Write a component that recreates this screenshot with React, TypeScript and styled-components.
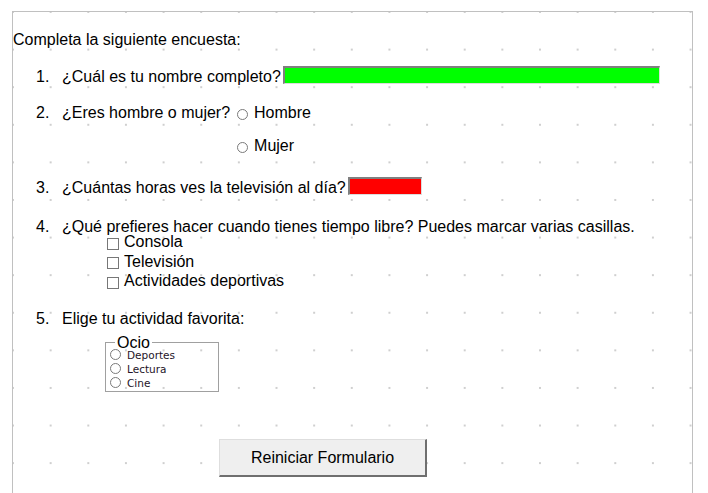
import React from "react";
import styled, { createGlobalStyle } from "styled-components";

const GlobalStyle = createGlobalStyle`
  html, body {
    margin: 0;
    padding: 0;
    overflow: hidden;
    background: #ffffff;
  }
  body {
    font-family: "Liberation Sans", Arial, sans-serif;
    font-size: 16px;
    color: #000;
  }
`;

const Page = styled.div`
  padding: 11px 15px 0 12px;
`;

const Frame = styled.div`
  box-sizing: border-box;
  width: 681px;
  height: 520px;
  border: 1px solid #c0c0c0;
  padding-top: 18px;
  background-image: radial-gradient(circle at center, #cfcfcf 0, #cfcfcf 0.7px, transparent 1.4px);
  background-size: 37.65px 37.6px;
  background-position: -18.8px -18.8px;
`;

const Intro = styled.div`
  line-height: 19px;
`;

const List = styled.ol`
  list-style: none;
  margin: 0 0 0 23px;
  padding: 0;
`;

const Item = styled.li<{ $gap: number; $lh?: number }>`
  display: flex;
  margin-top: ${(p) => p.$gap}px;
  line-height: ${(p) => p.$lh ?? 19}px;
`;

const Num = styled.span`
  width: 26px;
  flex-shrink: 0;
`;

const Body = styled.div`
  display: flex;
  flex-direction: column;
`;

const Line = styled.div`
  display: flex;
  align-items: flex-start;
`;

const TextField = styled.input.attrs({ type: "text" })<{ $w: number; $bg: string; $top: number }>`
  box-sizing: border-box;
  width: ${(p) => p.$w}px;
  height: 18px;
  margin: ${(p) => p.$top}px 0 0 2px;
  padding: 0;
  background: ${(p) => p.$bg};
  border-style: solid;
  border-width: 2px 1px 1px 2px;
  border-color: #7f7f7f #dcdcdc #dcdcdc #7f7f7f;
  outline: none;
`;

const Options = styled.div`
  display: flex;
  flex-direction: column;
  gap: 14px;
  margin-left: 7px;
`;

const Option = styled.label`
  display: flex;
  align-items: flex-start;
  gap: 6px;
`;

const Radio = styled.input.attrs({ type: "radio" })<{ $size: number; $top: number }>`
  appearance: none;
  box-sizing: border-box;
  width: ${(p) => p.$size}px;
  height: ${(p) => p.$size}px;
  margin: ${(p) => p.$top}px 0 0 0;
  border: 1px solid #7a7a7a;
  border-radius: 50%;
  background: #fff;
  flex-shrink: 0;
`;

const CheckList = styled.div`
  display: flex;
  flex-direction: column;
  gap: 4px;
  margin-left: 45px;
  line-height: 15px;
`;

const CheckRow = styled.label`
  display: flex;
  align-items: flex-start;
  gap: 5px;
`;

const Check = styled.input.attrs({ type: "checkbox" })`
  appearance: none;
  box-sizing: border-box;
  width: 12px;
  height: 12px;
  margin: 3.5px 0 0 0;
  border: 1px solid #777;
  background: #fff;
  flex-shrink: 0;
`;

const Group = styled.fieldset`
  box-sizing: border-box;
  width: 114px;
  min-width: 0;
  margin: 8px 0 0 43px;
  padding: 0 4px 1px 4px;
  border: 1px solid #a0a0a0;
`;

const GroupTitle = styled.legend`
  margin-left: 5px;
  padding: 0 2px;
  font-size: 16px;
  line-height: 14px;
`;

const GroupItems = styled.div`
  display: flex;
  flex-direction: column;
  margin-top: -2px;
`;

const GroupRow = styled.label`
  display: flex;
  align-items: center;
  gap: 6px;
  height: 14px;
  font-family: "DejaVu Sans", Verdana, sans-serif;
  font-size: 10.5px;
  line-height: 14px;
  color: #241428;
`;

const ButtonRow = styled.div`
  margin: 47.5px 0 0 206px;
`;

const ResetButton = styled.button`
  box-sizing: border-box;
  width: 208px;
  height: 38px;
  padding: 0;
  font-family: "Liberation Sans", Arial, sans-serif;
  font-size: 16px;
  line-height: 19px;
  color: #000;
  background: #efefef;
  border-style: solid;
  border-width: 1px 2px 2px 1px;
  border-color: #dedede #6f6f6f #6f6f6f #dedede;
`;

export default function App() {
  return (
    <>
      <GlobalStyle />
      <Page>
        <Frame>
          <Intro>Completa la siguiente encuesta:</Intro>
          <List>
            <Item $gap={18}>
              <Num>1.</Num>
              <Body>
                <Line>
                  <span>¿Cuál es tu nombre completo?</span>
                  <TextField $w={377} $bg="#00ff00" $top={-1} />
                </Line>
              </Body>
            </Item>
            <Item $gap={17}>
              <Num>2.</Num>
              <Body>
                <Line>
                  <span>¿Eres hombre o mujer?</span>
                  <Options>
                    <Option>
                      <Radio name="sexo" $size={11} $top={6} />
                      <span>Hombre</span>
                    </Option>
                    <Option>
                      <Radio name="sexo" $size={11} $top={6} />
                      <span>Mujer</span>
                    </Option>
                  </Options>
                </Line>
              </Body>
            </Item>
            <Item $gap={23}>
              <Num>3.</Num>
              <Body>
                <Line>
                  <span>¿Cuántas horas ves la televisión al día?</span>
                  <TextField $w={74} $bg="#ff0000" $top={-1} />
                </Line>
              </Body>
            </Item>
            <Item $gap={22} $lh={15}>
              <Num>4.</Num>
              <Body>
                <Line>
                  <span>¿Qué prefieres hacer cuando tienes tiempo libre? Puedes marcar varias casillas.</span>
                </Line>
                <CheckList>
                  <CheckRow>
                    <Check />
                    <span>Consola</span>
                  </CheckRow>
                  <CheckRow>
                    <Check />
                    <span>Televisión</span>
                  </CheckRow>
                  <CheckRow>
                    <Check />
                    <span>Actividades deportivas</span>
                  </CheckRow>
                </CheckList>
              </Body>
            </Item>
            <Item $gap={20}>
              <Num>5.</Num>
              <Body>
                <Line>
                  <span>Elige tu actividad favorita:</span>
                </Line>
                <Group>
                  <GroupTitle>Ocio</GroupTitle>
                  <GroupItems>
                    <GroupRow>
                      <Radio name="ocio" $size={11} $top={0} />
                      <span>Deportes</span>
                    </GroupRow>
                    <GroupRow>
                      <Radio name="ocio" $size={11} $top={0} />
                      <span>Lectura</span>
                    </GroupRow>
                    <GroupRow>
                      <Radio name="ocio" $size={11} $top={0} />
                      <span>Cine</span>
                    </GroupRow>
                  </GroupItems>
                </Group>
              </Body>
            </Item>
          </List>
          <ButtonRow>
            <ResetButton type="reset">Reiniciar Formulario</ResetButton>
          </ButtonRow>
        </Frame>
      </Page>
    </>
  );
}
